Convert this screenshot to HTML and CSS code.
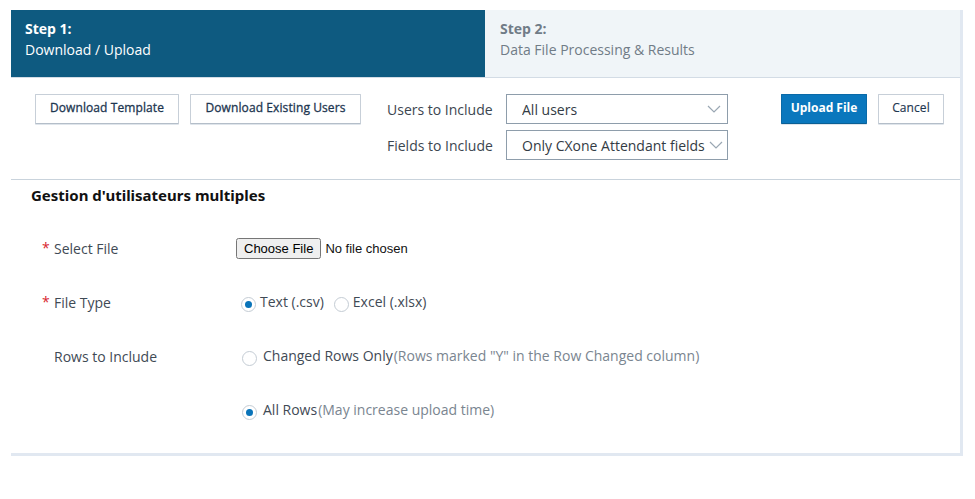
FILE: index.html
```html
<!DOCTYPE html>
<html>
<head>
<meta charset="utf-8">
<link rel="stylesheet" href="styles.css">
</head>
<body>
<div class="panel">
  <div class="steps">
    <div class="step active">
      <div class="step-num">Step 1:</div>
      <div class="step-name">Download / Upload</div>
    </div>
    <div class="step">
      <div class="step-num">Step 2:</div>
      <div class="step-name">Data File Processing &amp; Results</div>
    </div>
  </div>
  <div class="toolbar">
    <div class="dl-buttons">
      <button class="btn">Download Template</button>
      <button class="btn">Download Existing Users</button>
    </div>
    <div class="filters">
      <div class="filter-row">
        <span class="filter-label">Users to Include</span>
        <div class="select"><span>All users</span><svg class="chev" width="14" height="8" viewBox="0 0 14 8"><path d="M1 1 L7 7 L13 1" fill="none" stroke="#9aa7b3" stroke-width="1.2"/></svg></div>
      </div>
      <div class="filter-row">
        <span class="filter-label">Fields to Include</span>
        <div class="select"><span>Only CXone Attendant fields</span><svg class="chev" width="14" height="8" viewBox="0 0 14 8"><path d="M1 1 L7 7 L13 1" fill="none" stroke="#9aa7b3" stroke-width="1.2"/></svg></div>
      </div>
    </div>
    <div class="actions">
      <button class="btn primary">Upload File</button>
      <button class="btn cancel">Cancel</button>
    </div>
  </div>
  <div class="content">
    <h2 class="title">Gestion d'utilisateurs multiples</h2>
    <div class="form">
      <div class="row">
        <div class="label"><span class="req">*</span>Select File</div>
        <div class="control"><input type="file" class="file"></div>
      </div>
      <div class="row">
        <div class="label"><span class="req">*</span>File Type</div>
        <div class="control">
          <label class="radio"><span class="dot checked"></span><span class="rtext">Text (.csv)</span></label>
          <label class="radio"><span class="dot"></span><span class="rtext">Excel (.xlsx)</span></label>
        </div>
      </div>
      <div class="row">
        <div class="label"><span class="req blank"></span>Rows to Include</div>
        <div class="control">
          <label class="radio wide"><span class="dot"></span><span class="rtext">Changed Rows Only</span><span class="hint">(Rows marked "Y" in the Row Changed column)</span></label>
        </div>
      </div>
      <div class="row">
        <div class="label"></div>
        <div class="control">
          <label class="radio wide"><span class="dot checked"></span><span class="rtext">All Rows</span><span class="hint">(May increase upload time)</span></label>
        </div>
      </div>
    </div>
  </div>
</div>
</body>
</html>
```

FILE: styles.css
```css
* { box-sizing: border-box; }
body {
  margin: 0;
  background: #fff;
  font-family: "Open Sans", "Noto Sans", sans-serif;
}
.panel {
  margin: 10px 0 0 11px;
  width: 952px;
  border-right: 3px solid #e1e8f1;
  border-bottom: 3px solid #e1e8f1;
  padding-bottom: 16px;
}
.steps {
  display: flex;
  height: 68px;
  border-bottom: 1px solid #d3dce5;
}
.step {
  flex: 1;
  background: #f0f5f8;
  padding: 9px 15px;
  color: #707c87;
  font-size: 14px;
  line-height: 20px;
}
.step.active {
  flex: 0 0 474px;
  background: #0e5a80;
  color: #fff;
  padding-left: 14px;
}
.step-num { font-weight: 700; }
.step-name { margin-top: 1px; }
.toolbar {
  display: flex;
  align-items: flex-start;
  padding: 16px 16px 19px 24px;
  border-bottom: 1px solid #c9d3dc;
}
.dl-buttons { display: flex; gap: 11px; }
.btn {
  height: 30px;
  padding: 0 8px 3px;
  border: 1px solid #c7cfd8;
  border-bottom-color: #b4bec9;
  box-shadow: 0 1px 0 #dfe5eb;
  background: #fff;
  color: #1d3650;
  font-family: "Open Sans", sans-serif;
  font-size: 12px;
  font-weight: 400;
  -webkit-text-stroke: 0.3px #1d3650;
  letter-spacing: 0.1px;
  border-radius: 1px;
}
.dl-buttons .btn:first-child { width: 144px; }
.dl-buttons .btn:last-child { width: 171px; }
.filters {
  display: flex;
  flex-direction: column;
  gap: 6px;
  margin-left: 26px;
}
.filter-row { display: flex; align-items: center; }
.filter-label {
  width: 119px;
  color: #3c4650;
  font-size: 14px;
}
.select {
  width: 222px;
  height: 30px;
  border: 1px solid #8e9dab;
  display: flex;
  align-items: center;
  justify-content: space-between;
  padding: 0 6px 0 15px;
  color: #333b44;
  font-size: 14px;
  white-space: nowrap;
  overflow: hidden;
}
.filter-row + .filter-row .select { padding-right: 4px; }
.select span { overflow: hidden; }
.chev { flex: none; margin-left: 2px; }
.actions {
  display: flex;
  gap: 11px;
  margin-left: 53px;
}
.btn.primary {
  width: 86px;
  background: #0a77bd;
  border-color: #0a6aa8;
  border-bottom-color: #0b5f94;
  color: #fff;
  font-weight: 700;
  -webkit-text-stroke: 0;
  letter-spacing: 0;
  padding: 0 0 3px;
}
.btn.cancel {
  width: 66px;
  padding: 0 0 3px;
  -webkit-text-stroke: 0.15px #1d3650;
}
.content { padding: 0 20px 0 20px; }
.title {
  margin: 6px 0 0 0;
  font-family: "Noto Sans", "Open Sans", sans-serif;
  font-size: 15px;
  font-weight: 700;
  color: #111;
  line-height: 18px;
}
.form { margin-top: 17px; }
.row {
  display: flex;
  align-items: center;
  height: 54px;
}
.label {
  width: 205px;
  padding-left: 11px;
  color: #3f4a55;
  font-size: 14px;
  display: flex;
  align-items: center;
}
.req {
  color: #d8262e;
  width: 12px;
  display: inline-block;
  font-size: 14px;
  position: relative;
  top: -1px;
}
.control { display: flex; align-items: center; gap: 8px; }
.file {
  font-family: Arial, "Liberation Sans", sans-serif;
  font-size: 13px;
  color: #111;
}
.radio {
  display: flex;
  align-items: center;
  color: #3f4a55;
  font-size: 14px;
  margin-left: 5px;
}
.radio + .radio { margin-left: 2px; }
.radio.wide { margin-left: 6px; }
.radio.wide .dot { margin-right: 6px; }
.dot {
  width: 15px;
  height: 15px;
  border: 1px solid #c4ccd4;
  border-radius: 50%;
  background: #fff;
  position: relative;
  margin-right: 4px;
  top: 2px;
}
.dot.checked::after {
  content: "";
  position: absolute;
  left: 3px;
  top: 3px;
  width: 7px;
  height: 7px;
  border-radius: 50%;
  background: #0a74b9;
}
.rtext { position: relative; top: -1px; }
.hint { color: #7a8590; position: relative; top: -1px; margin-left: 1px; }
```
